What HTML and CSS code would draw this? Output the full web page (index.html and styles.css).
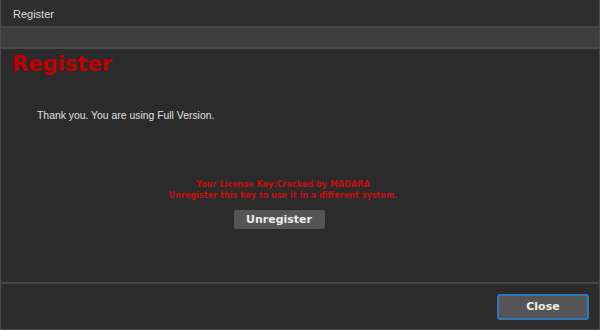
FILE: index.html
```
<!DOCTYPE html>
<html>
<head>
	<meta charset="UTF-8">
	<title>Register</title>
	<link rel="stylesheet" href="styles.css">
</head>
<body>
	<div class="win">
		<div class="titlebar">Register</div>
		<div class="toolband"></div>
		<div class="content">
			<h1 class="heading">Register</h1>
			<p class="thanks">Thank you. You are using Full Version.</p>
			<div class="license">
				<div>Your License Key:Cracked by MADARA</div>
				<div>Unregister this key to use it in a different system.</div>
			</div>
			<div class="center"><button class="btn unreg">Unregister</button></div>
		</div>
		<div class="footer">
			<button class="btn close">Close</button>
		</div>
	</div>
</body>
</html>
```

FILE: styles.css
```
html, body {margin: 0;padding: 0;background: #2c2c2c;}
.win {width: 600px;height: 330px;box-sizing: border-box;border: 1px solid #4c4c4c;border-top: 0;display: flex;flex-direction: column;font-family: "Liberation Sans", Arial, sans-serif;}
.titlebar {height: 26px;line-height: 28px;padding-left: 12px;font-size: 11px;color: #dcdcdc;background: #2e2e2e;border-bottom: 2px solid #464646;}
.toolband {height: 19px;background: #3e3e3e;border-bottom: 2px solid #4a4a4a;}
.content {flex: 1;background: #2b2b2b;border-bottom: 2px solid #464646;}
.heading {margin: 2px 0 0 11px;font-family: "DejaVu Sans", Verdana, sans-serif;font-size: 21px;line-height: 26px;font-weight: bold;color: #c00000;}
.thanks {margin: 33px 0 0 36px;font-size: 10.4px;color: #e0e0e0;}
.license {margin-top: 58px;padding-right: 34px;text-align: center;font-family: "DejaVu Sans Condensed", Tahoma, sans-serif;font-weight: bold;font-size: 9px;line-height: 11px;color: #c41010;}
.center {text-align: center;margin-top: 8px;padding-right: 42px;}
.btn {font-family: "DejaVu Sans", Tahoma, sans-serif;font-weight: bold;font-size: 11px;color: #ececec;background: #555;border: 0;border-radius: 2px;}
.unreg {width: 91px;height: 19px;padding: 0;}
.footer {height: 45px;background: #2b2b2b;display: flex;justify-content: flex-end;align-items: center;padding-right: 10px;}
.close {width: 92px;height: 26px;border: 2px solid #2d78bf;border-radius: 3px;box-sizing: border-box;}
```
